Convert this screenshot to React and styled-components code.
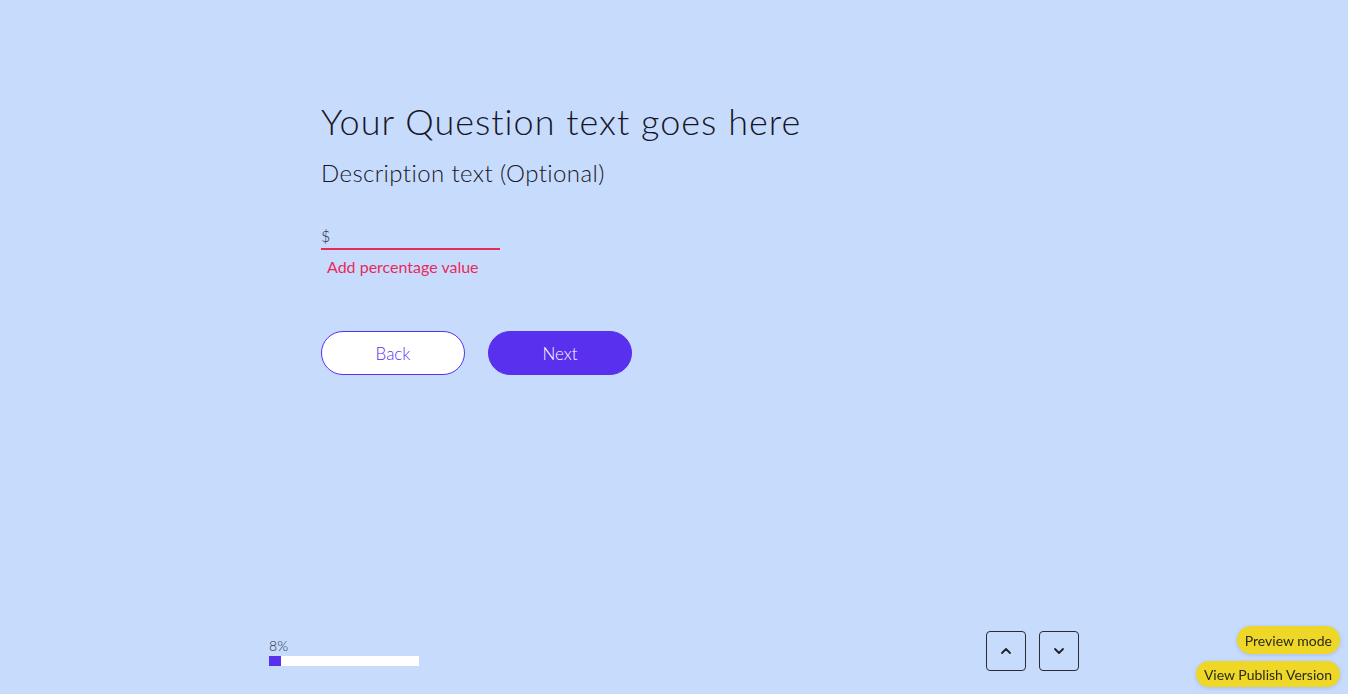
import React from "react";
import styled, { createGlobalStyle } from "styled-components";

const Global = createGlobalStyle`
  html, body { margin: 0; padding: 0; }
  body { background: #c7dcfd; font-family: Lato, "Noto Sans", sans-serif; }
  * { box-sizing: border-box; }
`;

const Page = styled.div`
  height: 694px;
  display: flex;
  flex-direction: column;
  background: #c7dcfd;
  overflow: hidden;
`;

const Main = styled.main`
  flex: 1;
  padding: 99px 0 0 321px;
  display: flex;
  flex-direction: column;
`;

const Title = styled.h1`
  margin: 0;
  font-family: Lato, sans-serif;
  font-weight: 300;
  font-size: 36px;
  letter-spacing: 1px;
  line-height: 44px;
  color: #181626;
`;

const Description = styled.p`
  margin: 15px 0 0;
  font-family: Lato, sans-serif;
  font-weight: 300;
  font-size: 24px;
  letter-spacing: 0.4px;
  line-height: 30px;
  color: #181626;
`;

const Field = styled.div`
  margin-top: 34px;
  width: 179px;
  display: flex;
  align-items: center;
  border-bottom: 2px solid #e82a5a;
  height: 28px;
`;

const Prefix = styled.span`
  font-family: Lato, sans-serif;
  font-size: 16px;
  font-weight: 300;
  color: #2a2a3a;
`;

const Input = styled.input`
  flex: 1;
  border: none;
  background: transparent;
  outline: none;
  font-size: 16px;
`;

const ErrorText = styled.div`
  margin: 7px 0 0 6px;
  font-family: Lato, sans-serif;
  font-size: 16px;
  color: #e82a5a;
`;

const Buttons = styled.div`
  margin-top: 55px;
  display: flex;
  gap: 23px;
`;

const Button = styled.button`
  width: 144px;
  height: 44px;
  border-radius: 22px;
  font-family: Lato, sans-serif;
  font-size: 17px;
  font-weight: 300;
  cursor: pointer;
  border: 1px solid #5a30ef;
  background: ${(p) => (p.$primary ? "#5a30ef" : "#ffffff")};
  color: ${(p) => (p.$primary ? "#ffffff" : "#5a30ef")};
`;

const Footer = styled.footer`
  width: 810px;
  margin: 0 auto 23px;
  display: flex;
  justify-content: space-between;
  align-items: flex-end;
`;

const Progress = styled.div`
  display: flex;
  flex-direction: column;
  gap: 2px;
  margin-bottom: 5px;
`;

const Percent = styled.span`
  font-family: Lato, sans-serif;
  font-size: 14px;
  font-weight: 300;
  color: #2e2e3c;
  line-height: 16px;
`;

const Track = styled.div`
  width: 150px;
  height: 10px;
  background: #ffffff;
`;

const Fill = styled.div`
  height: 100%;
  background: #5a30ef;
`;

const Nav = styled.div`
  display: flex;
  gap: 13px;
`;

const NavButton = styled.button`
  width: 40px;
  height: 40px;
  border: 1px solid #2b2b35;
  border-radius: 4px;
  background: transparent;
  display: flex;
  align-items: center;
  justify-content: center;
  padding: 0;
  cursor: pointer;
`;

const Pills = styled.div`
  position: fixed;
  right: 8px;
  bottom: 7px;
  display: flex;
  flex-direction: column;
  align-items: flex-end;
  gap: 7px;
`;

const Pill = styled.span`
  background: #eed726;
  color: #2a2a20;
  font-family: Lato, sans-serif;
  font-size: 14px;
  border-radius: 14px;
  padding: 0 8px;
  height: ${(p) => p.$h}px;
  display: flex;
  align-items: center;
  box-shadow: 0 1px 4px rgba(60, 60, 120, 0.2);
`;

const Chevron = ({ up }) => (
  <svg width="14" height="14" viewBox="0 0 14 14" fill="none">
    <path
      d={up ? "M3 9 L7 5 L11 9" : "M3 5 L7 9 L11 5"}
      stroke="#222"
      strokeWidth="1.8"
      strokeLinecap="round"
      strokeLinejoin="round"
    />
  </svg>
);

export default function App() {
  const pct = 8;
  return (
    <Page>
      <Global />
      <Main>
        <Title>Your Question text goes here</Title>
        <Description>Description text (Optional)</Description>
        <Field>
          <Prefix>$</Prefix>
          <Input />
        </Field>
        <ErrorText>Add percentage value</ErrorText>
        <Buttons>
          <Button>Back</Button>
          <Button $primary>Next</Button>
        </Buttons>
      </Main>
      <Footer>
        <Progress>
          <Percent>{pct}%</Percent>
          <Track>
            <Fill style={{ width: `${pct}%` }} />
          </Track>
        </Progress>
        <Nav>
          <NavButton><Chevron up /></NavButton>
          <NavButton><Chevron /></NavButton>
        </Nav>
      </Footer>
      <Pills>
        <Pill $h={28}>Preview mode</Pill>
        <Pill $h={26}>View Publish Version</Pill>
      </Pills>
    </Page>
  );
}
